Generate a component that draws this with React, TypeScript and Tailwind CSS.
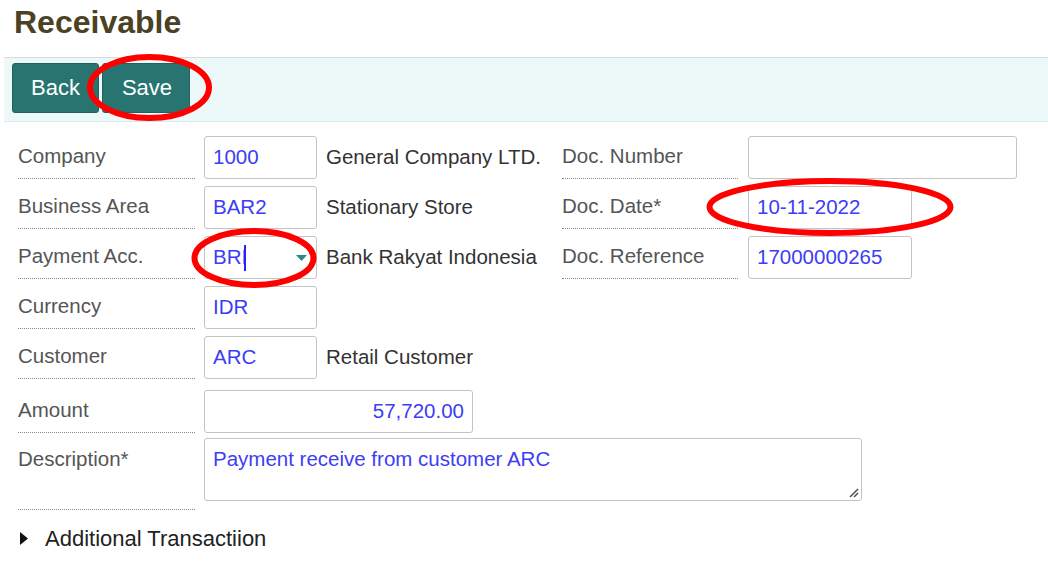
import { ReactNode } from "react"

function Label({ children, h = "h-[43px]", top = false }: { children: ReactNode; h?: string; top?: boolean }) {
  return (
    <div
      className={`w-[177px] shrink-0 ${h} flex ${top ? "items-start pt-[6px]" : "items-center pb-[1px]"} border-b border-dotted border-[#8a8a8a] text-[#555]`}
    >
      {children}
    </div>
  )
}

function Label2({ children }: { children: ReactNode }) {
  return (
    <div className="w-[176px] shrink-0 h-[43px] flex items-center pb-[1px] border-b border-dotted border-[#8a8a8a] text-[#555]">
      {children}
    </div>
  )
}

function Field({ value, w, align = "left", children }: { value: string; w: string; align?: "left" | "right"; children?: ReactNode }) {
  return (
    <div
      className={`relative ${w} h-[43px] shrink-0 flex items-center px-[8px] border border-[#c4c4c4] rounded-[3px] bg-white text-[#3d3df5] ${align === "right" ? "justify-end" : ""}`}
    >
      {value}
      {children}
    </div>
  )
}

export default function App() {
  return (
    <div className="relative w-[1048px] h-[565px] bg-white overflow-hidden font-['Liberation_Sans',Arial,sans-serif]">
      <div className="h-[57px] pl-[14px] pt-[4px]">
        <h1 className="text-[32px] leading-[37px] font-bold text-[#4b4224]">Receivable</h1>
      </div>

      <div className="ml-[4px] h-[65px] border-t border-[#d9d9d9] border-b border-b-[#d4eeee] bg-[#edf8f8] flex items-start gap-[3px] pl-[8px] pt-[5px]">
        <button className="w-[87px] h-[50px] pb-[2px] rounded-[3px] bg-[#287470] border border-[#21625e] text-white text-[22px]">Back</button>
        <button className="w-[88px] h-[50px] pb-[2px] pl-[2px] rounded-[3px] bg-[#287470] border border-[#21625e] text-white text-[22px]">Save</button>
      </div>

      <div className="pl-[18px] pt-[14px] text-[20.5px]">
        <div className="flex flex-col gap-[7px]">
          <div className="flex items-start">
            <Label>Company</Label>
            <div className="ml-[9px]"><Field value="1000" w="w-[113px]" /></div>
            <div className="ml-[9px] w-[236px] h-[43px] flex items-center text-[#333]">General Company LTD.</div>
            <Label2>Doc. Number</Label2>
            <div className="ml-[10px]"><Field value="" w="w-[269px]" /></div>
          </div>
          <div className="flex items-start">
            <Label>Business Area</Label>
            <div className="ml-[9px]"><Field value="BAR2" w="w-[113px]" /></div>
            <div className="ml-[9px] w-[236px] h-[43px] flex items-center text-[#333]">Stationary Store</div>
            <Label2>Doc. Date*</Label2>
            <div className="ml-[10px]"><Field value="10-11-2022" w="w-[164px]" /></div>
          </div>
          <div className="flex items-start">
            <Label>Payment Acc.</Label>
            <div className="ml-[9px]">
              <Field value="BRI" w="w-[113px]">
                <span className="inline-block w-[2px] h-[26px] bg-[#2424ff] ml-[-3px]" />
                <svg className="absolute right-[9px] top-[18px]" width="11" height="6" viewBox="0 0 11 6">
                  <path d="M0 0 L11 0 L5.5 6 Z" fill="#2b8a80" />
                </svg>
              </Field>
            </div>
            <div className="ml-[9px] w-[236px] h-[43px] flex items-center text-[#333]">Bank Rakyat Indonesia</div>
            <Label2>Doc. Reference</Label2>
            <div className="ml-[10px]"><Field value="17000000265" w="w-[164px]" /></div>
          </div>
          <div className="flex items-start">
            <Label>Currency</Label>
            <div className="ml-[9px]"><Field value="IDR" w="w-[113px]" /></div>
          </div>
          <div className="flex items-start">
            <Label>Customer</Label>
            <div className="ml-[9px]"><Field value="ARC" w="w-[113px]" /></div>
            <div className="ml-[9px] h-[43px] flex items-center text-[#333]">Retail Customer</div>
          </div>
        </div>

        <div className="flex items-start mt-[11px]">
          <Label>Amount</Label>
          <div className="ml-[9px]"><Field value="57,720.00" w="w-[269px]" align="right" /></div>
        </div>

        <div className="flex items-start mt-[5px]">
          <Label h="h-[72px]" top>Description*</Label>
          <div className="ml-[9px] relative w-[658px] h-[63px] border border-[#c4c4c4] rounded-[3px] px-[8px] pt-[5px] text-[#3d3df5]">
            Payment receive from customer ARC
            <svg className="absolute right-[2px] bottom-[2px]" width="12" height="12" viewBox="0 0 12 12">
              <path d="M11 3 L3 11 M11 7 L7 11" stroke="#555" strokeWidth="1.6" />
            </svg>
          </div>
        </div>

        <div className="flex items-center mt-[15px] h-[26px] text-[22px] text-[#222]">
          <svg width="9" height="13" viewBox="0 0 9 13" className="ml-[2px]">
            <path d="M0 0 L8 6.5 L0 13 Z" fill="#111" />
          </svg>
          <span className="ml-[16px]">Additional Transactiion</span>
        </div>
      </div>

      <svg className="absolute inset-0 pointer-events-none" width="1048" height="565" viewBox="0 0 1048 565">
        <ellipse cx="149.5" cy="87.5" rx="59.5" ry="30.5" fill="none" stroke="#f00" strokeWidth="6" />
        <ellipse cx="830" cy="207" rx="120.5" ry="26" fill="none" stroke="#f00" strokeWidth="6" />
        <ellipse cx="254" cy="258" rx="59.5" ry="27" fill="none" stroke="#f00" strokeWidth="6" />
      </svg>
    </div>
  )
}
